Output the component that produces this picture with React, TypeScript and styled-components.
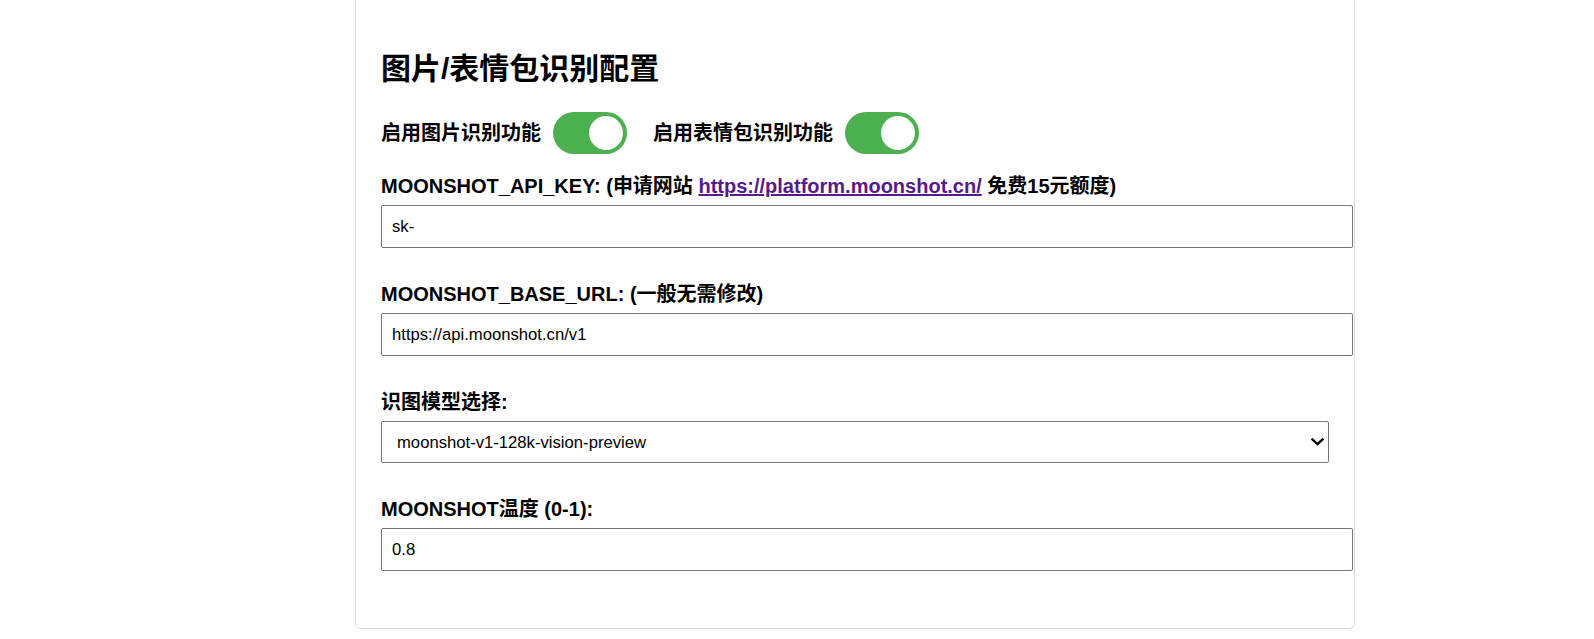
import React from "react";
import styled, { createGlobalStyle } from "styled-components";

const GlobalStyle = createGlobalStyle`
  html, body {
    margin: 0;
    padding: 0;
    background: #ffffff;
  }
  body {
    font-family: "Liberation Sans", "Noto Sans CJK SC", Arial, sans-serif;
    color: #000000;
    overflow: hidden;
  }
`;

const Page = styled.div`
  display: flex;
  justify-content: center;
  padding-left: 116px;
`;

const Card = styled.section`
  box-sizing: border-box;
  width: 1000px;
  margin-top: -12px;
  padding: 25px 25px 24px;
  border: 1px solid #dcdcdc;
  border-radius: 6px;
  background: #ffffff;
`;

const Title = styled.h2`
  margin: 37px 0 25px;
  font-size: 30px;
  line-height: 36px;
  font-weight: 700;
  font-family: "Liberation Sans", "Noto Sans CJK SC", sans-serif;
`;

const ToggleRow = styled.div`
  display: flex;
  align-items: center;
  height: 42px;
  margin-bottom: 19px;
`;

const ToggleItem = styled.label`
  display: flex;
  align-items: center;
  gap: 12px;
  margin-right: 26px;
  font-size: 20px;
  line-height: 24px;
  font-weight: 700;
  cursor: pointer;
`;

const Switch = styled.span<{ $on: boolean }>`
  position: relative;
  display: inline-block;
  box-sizing: border-box;
  width: 74px;
  height: 42px;
  border-radius: 21px;
  background: ${(p) => (p.$on ? "#4caf50" : "#cccccc")};
`;

const Knob = styled.span<{ $on: boolean }>`
  position: absolute;
  top: 4px;
  left: ${(p) => (p.$on ? "36px" : "4px")};
  width: 34px;
  height: 34px;
  border-radius: 50%;
  background: #ffffff;
`;

const Group = styled.div`
  margin-bottom: 33px;
`;

const FieldLabel = styled.label`
  display: block;
  padding-top: 1px;
  margin-bottom: 7px;
  font-size: 20px;
  line-height: 24px;
  font-weight: 700;
`;

const Link = styled.a`
  color: #551a8b;
  text-decoration: underline;
`;

const TextInput = styled.input`
  box-sizing: content-box;
  display: block;
  width: 950px;
  height: 21px;
  padding: 10px 10px;
  margin: 0;
  border: 1px solid #767676;
  border-radius: 2px;
  font-family: "Liberation Sans", Arial, sans-serif;
  font-size: 16.67px;
  color: #000000;
  background: #ffffff;
  outline: none;
`;

const SelectWrap = styled.div`
  position: relative;
  width: 948px;
`;

const Select = styled.select`
  appearance: none;
  -webkit-appearance: none;
  box-sizing: border-box;
  display: block;
  width: 100%;
  height: 42px;
  margin: 0;
  padding: 0 30px 0 15px;
  border: 1px solid #767676;
  border-radius: 2px;
  font-family: "Liberation Sans", Arial, sans-serif;
  font-size: 16.67px;
  color: #000000;
  background: #ffffff;
  outline: none;
`;

const Chevron = styled.svg`
  position: absolute;
  right: 5px;
  top: 50%;
  width: 13px;
  height: 8px;
  margin-top: -4px;
  pointer-events: none;
`;

export default function App() {
  return (
    <>
      <GlobalStyle />
      <Page>
        <Card>
          <Title>图片/表情包识别配置</Title>
          <ToggleRow>
            <ToggleItem>
              启用图片识别功能
              <Switch $on>
                <Knob $on />
              </Switch>
            </ToggleItem>
            <ToggleItem>
              启用表情包识别功能
              <Switch $on>
                <Knob $on />
              </Switch>
            </ToggleItem>
          </ToggleRow>

          <Group>
            <FieldLabel>
              MOONSHOT_API_KEY: (申请网站{" "}
              <Link href="#">https://platform.moonshot.cn/</Link> 免费15元额度)
            </FieldLabel>
            <TextInput type="text" defaultValue="sk-" />
          </Group>

          <Group>
            <FieldLabel>MOONSHOT_BASE_URL: (一般无需修改)</FieldLabel>
            <TextInput type="text" defaultValue="https://api.moonshot.cn/v1" />
          </Group>

          <Group>
            <FieldLabel>识图模型选择:</FieldLabel>
            <SelectWrap>
              <Select defaultValue="moonshot-v1-128k-vision-preview">
                <option value="moonshot-v1-8k-vision-preview">moonshot-v1-8k-vision-preview</option>
                <option value="moonshot-v1-32k-vision-preview">moonshot-v1-32k-vision-preview</option>
                <option value="moonshot-v1-128k-vision-preview">moonshot-v1-128k-vision-preview</option>
              </Select>
              <Chevron viewBox="0 0 13 8">
                <path d="M1.5 1.5 L6.5 6.2 L11.5 1.5" fill="none" stroke="#000" strokeWidth="2.4" strokeLinecap="square" />
              </Chevron>
            </SelectWrap>
          </Group>

          <Group>
            <FieldLabel>MOONSHOT温度 (0-1):</FieldLabel>
            <TextInput type="text" defaultValue="0.8" />
          </Group>
        </Card>
      </Page>
    </>
  );
}
